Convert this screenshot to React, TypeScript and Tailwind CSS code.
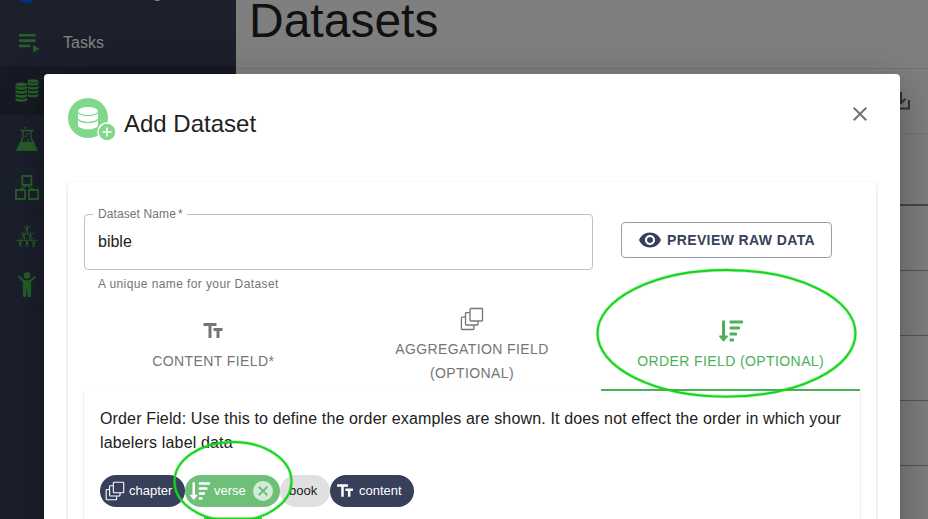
import React from "react";
import { MdTextFields, MdVisibility, MdClose } from "react-icons/md";
import { FaSortAmountDown } from "react-icons/fa";
import { GiHumanPyramid } from "react-icons/gi";

function TaskList() {
  return (
    <svg width="22" height="20" viewBox="0 0 22 20" fill="currentColor">
      <path d="M0 1h16.500v2.600H0zM0 6.300h16.500v2.600H0zM0 11.700h11.300v2.600H0zM14 12l6.500 3.700-6.500 3.700z" />
    </svg>
  );
}

function CoinStacks() {
  return (
    <svg width="24" height="24" viewBox="0 0 24 24" fill="currentColor">
      {[0, 1, 2, 3].map((i) => (
        <path key={i} transform={`translate(0 ${i * 3.9})`} d="M12.600 2.700v2.400c0 1 2.400 1.700 5.400 1.700s5.400-.7 5.400-1.700V2.700c-1 1-3 1.500-5.400 1.500s-4.400-.5-5.400-1.500z" />
      ))}
      <ellipse cx="18" cy="1.900" rx="5.400" ry="1.700" />
      <path d="M0 5h12.700v17H0z" className="fill-[#171a24]" />
      {[0, 1, 2, 3].map((i) => (
        <path key={i} transform={`translate(0 ${i * 4})`} d="M.5 6.600V9c0 1.100 2.600 1.900 5.800 1.900s5.900-.8 5.900-1.900V6.600c-1.100 1.100-3.300 1.600-5.900 1.600S1.600 7.700.5 6.600z" />
      ))}
      <ellipse cx="6.300" cy="5.500" rx="5.900" ry="1.900" />
    </svg>
  );
}

function Flask() {
  return (
    <svg width="24" height="24" viewBox="0 0 24 24" fill="none" stroke="currentColor" strokeWidth="1.400">
      <path d="M5.500 3.500h13M8 3.500v7L2.300 23h19.400L16 10.500v-7" />
      <path d="M5.500 15.500h13L21.700 23H2.300z" fill="currentColor" />
      <path d="M9.500 0h1.500v1.500H9.500zM12 6h1.700v1.700H12zM9.800 8.500h1.700v1.700H9.800zM12.500 12h1.700v1.700h-1.700z" fill="currentColor" stroke="none" />
    </svg>
  );
}

function LinkedBoxes() {
  return (
    <svg width="24" height="25" viewBox="0 0 24 25" fill="none" stroke="currentColor" strokeWidth="1.900">
      <path d="M7.300 1h9v9h-9zM1 15h9v9H1zM14 15h9v9h-9z" />
      <path d="M5 14.500l7-4 7 4" strokeWidth="1.400" />
    </svg>
  );
}

function RaisedArms() {
  return (
    <svg width="18" height="25" viewBox="0 0 18 25" fill="currentColor">
      <circle cx="9" cy="3.600" r="3.300" />
      <path d="M1.200 4.900l5 4.600h5.600l5-4.600" fill="none" stroke="currentColor" strokeWidth="2.100" strokeLinecap="round" strokeLinejoin="round" />
      <path d="M4.900 8.400h8.200v15a1.400 1.400 0 0 1-3.600 0v-6h-1v6a1.400 1.400 0 0 1-3.600 0z" />
    </svg>
  );
}

function Layers({ size }: { size: number }) {
  return (
    <svg width={size} height={size} viewBox="0 0 24 24" fill="none" stroke="currentColor" strokeWidth="1.300" strokeLinejoin="round">
      <rect x="10" y="1.500" width="12.500" height="12.500" rx=".8" />
      <path d="M9.800 5.700H6.300a.8.800 0 0 0-.8.8v10.700c0 .5.300.8.800.8h10.900c.5 0 .8-.3.800-.8v-3" />
      <path d="M5.300 10.200H2.200a.8.800 0 0 0-.8.800v10.700c0 .5.300.8.800.8h10.900c.5 0 .8-.3.800-.8v-3.500" />
    </svg>
  );
}

function DatasetLogo() {
  return (
    <svg width="48" height="44" viewBox="0 0 48 44">
      <circle cx="20" cy="20" r="20" fill="#80d88a" />
      <g fill="#fff">
        <ellipse cx="20" cy="13" rx="10" ry="4" />
        <path d="M10 15.300v4.500c0 2.300 4.400 4 10 4s10-1.700 10-4v-4.500c-1.700 2-5.500 3-10 3s-8.300-1-10-3z" />
        <path d="M10 22.300v5c0 2.300 4.400 4 10 4s10-1.700 10-4v-5c-1.700 2-5.500 3-10 3s-8.300-1-10-3z" />
      </g>
      <circle cx="39" cy="34" r="9" fill="#80d88a" stroke="#fff" strokeWidth="1.500" />
      <path d="M39 29.500v9M34.500 34h9" stroke="#fff" strokeWidth="1.700" />
    </svg>
  );
}

function Sidebar() {
  return (
    <aside className="flex h-[519px] w-[236px] shrink-0 flex-col bg-[#1c202d] text-[#26602a]">
      <div className="flex h-[19px] shrink-0 items-end overflow-hidden border-b border-[#181b26] pl-[17px] text-base leading-6 text-[#858585]">
        <span className="mb-[15px] h-5 w-5 shrink-0 rounded-full bg-[#032e87]" />
        <span className="mb-[13px] ml-[26px] whitespace-nowrap">Data Labeling</span>
      </div>
      <div className="flex h-12 shrink-0 items-center border-b border-[#181b26] pl-[19px]">
        <TaskList />
        <span className="ml-[22px] text-base text-[#858585]">Tasks</span>
      </div>
      <div className="flex h-12 shrink-0 items-center bg-[#171a24] pl-[15px]"><CoinStacks /></div>
      <div className="flex h-12 shrink-0 items-center border-b border-[#181b26] pl-[15px]"><Flask /></div>
      <div className="flex h-[49px] shrink-0 items-center border-b border-[#181b26] pl-[15px]"><LinkedBoxes /></div>
      <div className="flex h-12 shrink-0 items-center pl-[15px]"><GiHumanPyramid className="h-6 w-6" /></div>
      <div className="flex h-[49px] shrink-0 items-center border-b border-[#181b26] pl-[18px]"><RaisedArms /></div>
    </aside>
  );
}

function PageBody() {
  return (
    <main className="flex min-w-0 flex-1 flex-col bg-[#7f7f7f]">
      <h1 className="-mt-[7px] h-[75px] pl-[13px] text-[48px] leading-[56px] text-[#111]">Datasets</h1>
      <div className="flex h-[66px] shrink-0 items-center justify-end border-y border-[#747474] pr-[17px] text-[#333]">
        <svg width="20" height="20" viewBox="0 0 20 20" fill="none" stroke="currentColor" strokeWidth="2">
          <path d="M2 9v8.500h16V9M10 1v11M5.500 7.800l4.500 4.500 4.500-4.500" />
        </svg>
      </div>
      <div className="h-[72px] shrink-0 border-b-2 border-[#484848]" />
      <div className="h-[65px] shrink-0 border-b border-[#555]" />
      <div className="h-[65px] shrink-0 border-b border-[#555]" />
      <div className="h-[65px] shrink-0 border-b border-[#555]" />
      <div className="h-[65px] shrink-0 border-b border-[#555]" />
    </main>
  );
}

function NameRow() {
  return (
    <div className="flex h-[84px] items-start">
      <div className="w-[509px]">
        <fieldset className="h-[63px] rounded border border-[#c0c0c0] px-2">
          <legend className="ml-0 h-[14px] w-[94px] px-[5px] text-xs leading-[14px] tracking-[0.1px] whitespace-nowrap text-[#757575]">Dataset Name<span className="ml-[2px]">*</span></legend>
          <div className="pt-[9px] pl-[5px] text-base leading-6 text-[#212121]">bible</div>
        </fieldset>
        <p className="mt-[4px] ml-[14px] text-xs leading-5 tracking-[0.4px] text-[#757575]">A unique name for your Dataset</p>
      </div>
      <button className="mt-[15px] ml-7 flex h-9 w-[211px] items-center justify-center rounded border border-[#9a9eac] text-sm font-bold tracking-[0.4px] text-[#373f5a]">
        <MdVisibility className="mr-[5px] h-6 w-6" />
        PREVIEW RAW DATA
      </button>
    </div>
  );
}

function FieldTabs() {
  return (
    <div className="grid h-[100px] grid-cols-3 text-center text-sm leading-6 tracking-[0.4px] text-[#757575]">
      <div className="flex flex-col items-center pt-[28px]">
        <MdTextFields className="mb-[6px] h-6 w-6" />
        <span>CONTENT FIELD*</span>
      </div>
      <div className="flex flex-col items-center pt-4">
        <span className="mb-[6px] h-6"><Layers size={24} /></span>
        <span>AGGREGATION FIELD<br />(OPTIONAL)</span>
      </div>
      <div className="flex flex-col items-center border-b-2 border-[#4caf5a] pt-[28px] text-[#4caf5a]">
        <FaSortAmountDown className="mb-[6px] h-6 w-6" />
        <span>ORDER FIELD (OPTIONAL)</span>
      </div>
    </div>
  );
}

function FieldChips() {
  return (
    <div className="mt-5 flex h-8 text-[13px] text-white [&>div]:flex [&>div]:items-center [&>div]:rounded-full">
      <div className="w-[85px] bg-[#373f5a] pl-[5px]"><Layers size={20} /><span className="ml-1">chapter</span></div>
      <div className="w-[95px] bg-[#6ebf78] pl-[5px]">
        <FaSortAmountDown className="h-5 w-5" />
        <span className="ml-1">verse</span>
        <span className="ml-[7px] flex h-5 w-5 items-center justify-center rounded-full bg-[#d3ebd6] text-[#6ebf78]">
          <svg width="10" height="10" viewBox="0 0 10 10" stroke="currentColor" strokeWidth="2"><path d="M.7.7l8.600 8.600M9.300.7L.7 9.300" /></svg>
        </span>
      </div>
      <div className="w-[50px] bg-[#e0e0e0] pl-[9px] text-[#212121]">book</div>
      <div className="w-[84px] bg-[#373f5a] pl-[5px]"><MdTextFields className="h-5 w-5" /><span className="ml-1">content</span></div>
    </div>
  );
}

export default function App() {
  return (
    <div className="relative h-[519px] w-[928px] overflow-hidden font-['Liberation_Sans',Arial,sans-serif]">
      <div className="flex h-[519px]">
        <Sidebar />
        <PageBody />
      </div>
      <section className="absolute top-[74px] left-[44px] h-[600px] w-[856px] rounded bg-white px-6 pt-6 shadow-[0_11px_15px_-7px_rgba(0,0,0,0.2),0_24px_38px_3px_rgba(0,0,0,0.14),0_9px_46px_8px_rgba(0,0,0,0.12)]">
        <header className="flex h-[84px] items-start">
          <DatasetLogo />
          <h2 className="mt-[10px] ml-2 text-2xl leading-8 text-[#212121]">Add Dataset</h2>
          <MdClose className="mt-1 mr-[4px] ml-auto h-6 w-6 text-[#757575]" />
        </header>
        <div className="h-[500px] rounded px-4 pt-[25px] shadow-[0_1px_3px_rgba(0,0,0,0.2)]">
          <NameRow />
          <FieldTabs />
          <div className="h-[300px] px-4 pt-4 shadow-[0_1px_2px_rgba(0,0,0,0.2)]">
            <p className="text-base leading-6 tracking-[0.15px] text-[#212121]">Order Field: Use this to define the order examples are shown. It does not effect the order in which your labelers label data</p>
            <FieldChips />
          </div>
        </div>
      </section>
      <svg className="pointer-events-none absolute inset-0" width="928" height="519" fill="none">
        <g stroke="#13d51c">
          <ellipse cx="726.500" cy="333.300" rx="129" ry="63.300" strokeWidth="3.400" strokeOpacity=".35" />
          <ellipse cx="726.500" cy="333.300" rx="129" ry="63.300" strokeWidth="1.900" />
          <ellipse cx="233" cy="481.500" rx="58.500" ry="39.500" strokeWidth="3.400" strokeOpacity=".35" />
          <ellipse cx="233" cy="481.500" rx="58.500" ry="39.500" strokeWidth="1.900" />
          <path d="M204 518.300h58" strokeWidth="1.500" />
        </g>
      </svg>
    </div>
  );
}
